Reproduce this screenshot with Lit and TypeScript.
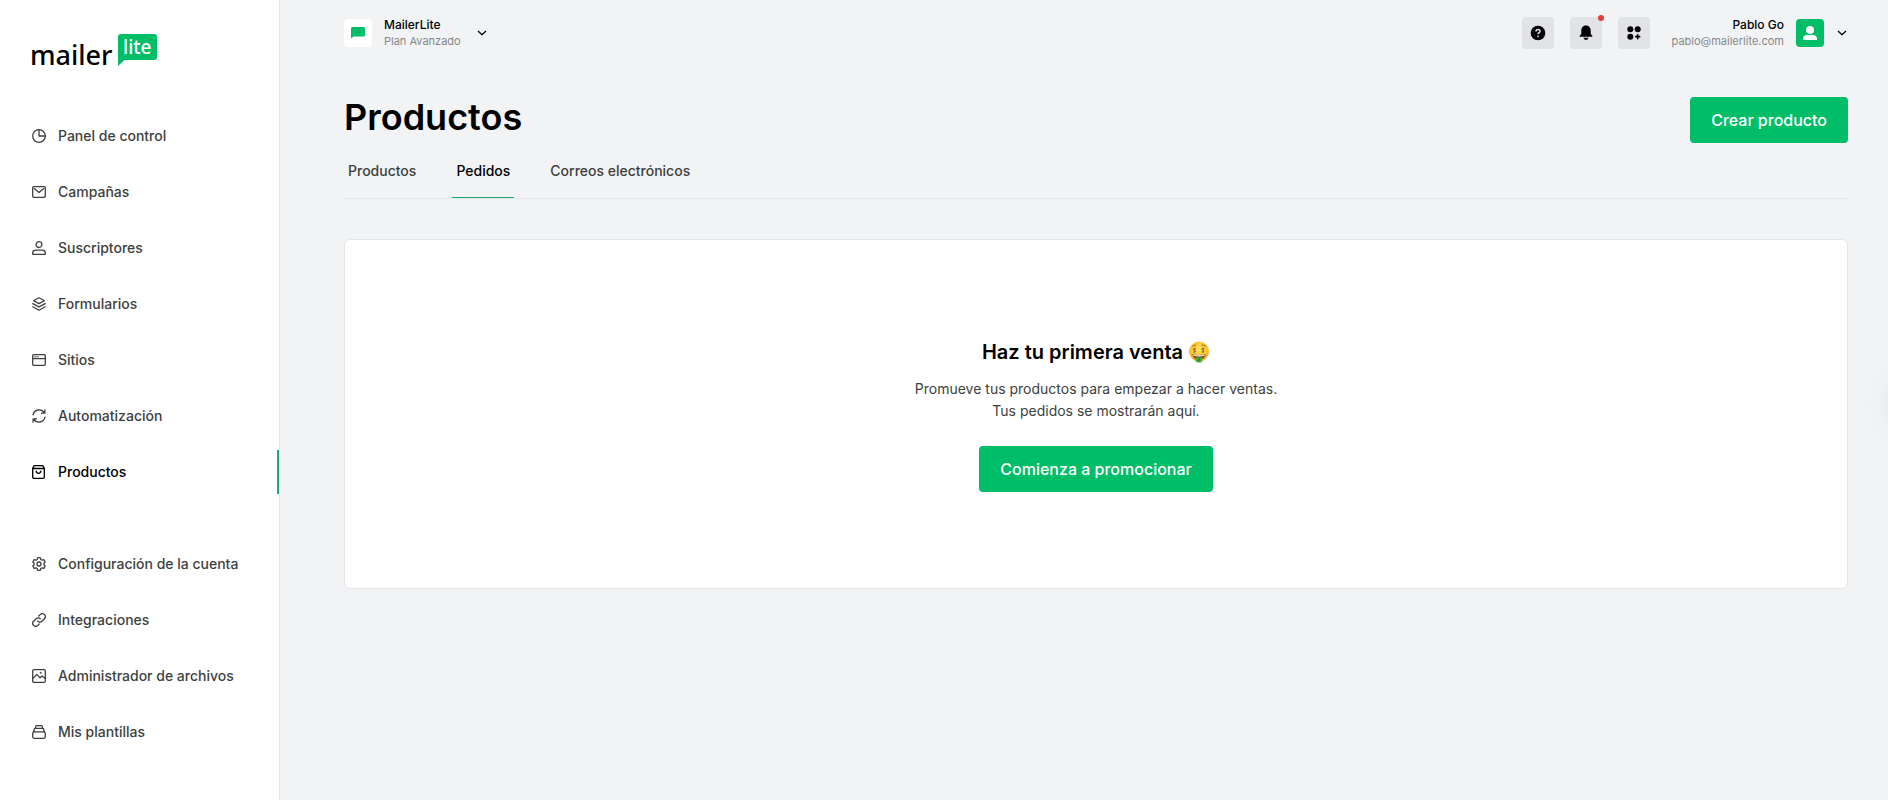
import { LitElement, html, css, svg, nothing } from "lit";
import { customElement, property } from "lit/decorators.js";

const icons: Record<string, unknown> = {
  dashboard: svg`<circle cx="7" cy="7" r="6.3"/><path d="M7 .8V7h6.2"/>`,
  mail: svg`<rect x=".7" y="1.7" width="12.6" height="10.6" rx="1"/><path d="M2.2 3.600 7 7.400l4.800-3.800"/>`,
  user: svg`<circle cx="7" cy="3.6" r="2.9"/><path d="M.7 13.300v-1.300c0-1.600 1.300-2.800 3-2.800h6.600c1.700 0 3 1.200 3 2.800v1.300z"/>`,
  layers: svg`<path d="M7 .8 12.400 3.700 7 6.600 1.600 3.700z"/><path d="M.8 6.600 7 9.900l6.200-3.300M.8 9.800 7 13.200l6.200-3.400"/>`,
  browser: svg`<rect x=".7" y="1.700" width="12.600" height="10.600" rx="1"/><path d="M.7 5.700h12.600"/><path d="M2.300 3.800h4.400" stroke-width=".8" stroke-dasharray="1 .6"/>`,
  sync: svg`<path d="M1 5.800a6.200 6.200 0 0 1 11.300-2M13 8.200a6.200 6.200 0 0 1-11.300 2M12.900.8v3.400H9.500M1.100 13.200V9.800h3.400"/>`,
  bag: svg`<path d="M2.300.7h8.400l1.600 2.500v8.800c0 .8-.5 1.300-1.300 1.300H2c-.8 0-1.300-.5-1.300-1.300V3.200zM.7 3.500h11.600M4.200 6.100c0 2.900 4.600 2.900 4.600 0"/>`,
  gear: svg`<circle cx="7" cy="7" r="2"/><path d="M5.700.7h2.600l.5 1.800 1.200.7 1.800-.5 1.400 2.300-1.300 1.300v1.400l1.300 1.300-1.400 2.300-1.800-.5-1.200.7-.5 1.800H5.700l-.5-1.800-1.200-.7-1.800.5L.8 9l1.300-1.300V6.300L.8 5l1.400-2.300 1.800.5 1.200-.7z"/>`,
  link: svg`<path d="M5.700 8.300a2.900 2.900 0 0 0 4.200 0l2.500-2.500a2.900 2.900 0 0 0-4.200-4.200L6.800 3M8.300 5.700a2.900 2.900 0 0 0-4.200 0L1.600 8.200a2.900 2.900 0 0 0 4.200 4.200L7.200 11"/>`,
  image: svg`<rect x=".7" y=".7" width="12.600" height="12.600" rx="1.300"/><path d="M.8 9.500 4.800 5.400l3.200 3.300 2-1.800 3.200 2.600"/><circle cx="8.700" cy="3.800" r=".4"/>`,
  stack: svg`<rect x=".7" y="6.900" width="12.600" height="6.400" rx="1.500"/><path d="M1.700 6.900 2.400 4c.1-.4.400-.6.800-.6h7.600c.4 0 .7.200.8.600l.7 2.900M3.300 3.400 3.900 1.200c.1-.3.300-.5.700-.5h4.800c.4 0 .6.200.7.500l.6 2.200"/>`,
};

const primary: [string, string][] = [
  ["dashboard", "Panel de control"],
  ["mail", "Campañas"],
  ["user", "Suscriptores"],
  ["layers", "Formularios"],
  ["browser", "Sitios"],
  ["sync", "Automatización"],
  ["bag", "Productos"],
];

const secondary: [string, string][] = [
  ["gear", "Configuración de la cuenta"],
  ["link", "Integraciones"],
  ["image", "Administrador de archivos"],
  ["stack", "Mis plantillas"],
];

const reset = css`
  * { box-sizing: border-box; }
  a { color: inherit; text-decoration: none; }
  button { font: inherit; color: inherit; border: 0; padding: 0; background: none; cursor: pointer; }
  svg { display: block; flex: none; }
`;

const chevron = html`<svg width="12" height="12" viewBox="0 0 12 12" fill="none" stroke="#000" stroke-width="1.2" stroke-linecap="round" stroke-linejoin="round"><path d="m2.300 4.300 3.700 3.500 3.700-3.500"/></svg>`;

@customElement("app-sidebar")
export class AppSidebar extends LitElement {
  @property() active = "";

  static styles = [
    reset,
    css`
      :host { display: block; background: #fff; border-right: 1px solid #e6e8ea; }
      .logo { display: block; padding: 33px 28px 0; height: 114px; }
      .group { display: flex; flex-direction: column; gap: 12px; margin: 0 0 48px; padding: 0; list-style: none; }
      .item { display: flex; align-items: center; gap: 12px; height: 44px; padding-left: 32px; border-right: 2px solid transparent; font-size: 14px; line-height: 20px; font-weight: 500; color: #3e3f40; }
      .item.current { color: #000; border-color: #1fab6c; }
      .word { font-family: "Noto Sans", sans-serif; font-weight: 500; }
    `,
  ];

  private group(items: [string, string][]) {
    return html`<ul class="group">
      ${items.map(([icon, label]) => html`<li>
        <a href="#" class="item ${label === this.active ? "current" : ""}" aria-current=${label === this.active ? "page" : nothing}>
          <svg width="14" height="14" viewBox="0 0 14 14" fill="none" stroke="currentColor" stroke-width="1.3" stroke-linecap="round" stroke-linejoin="round" aria-hidden="true">${icons[icon]}</svg>
          <span>${label}</span>
        </a>
      </li>`)}
    </ul>`;
  }

  render() {
    return html`
      <a class="logo" href="#" aria-label="MailerLite">
        <svg width="134" height="44" viewBox="-4 0 134 44">
          <text class="word" x="-2" y="32" font-size="27">mailer</text>
          <path fill="#00bd68" d="M89 1h33q3 0 3 3v20q0 3-3 3H92.500L86 33V4q0-3 3-3z"/>
          <text class="word" x="91" y="21" font-size="19" fill="#fff">lite</text>
        </svg>
      </a>
      <nav>${this.group(primary)}${this.group(secondary)}</nav>
    `;
  }
}

@customElement("app-topbar")
export class AppTopbar extends LitElement {
  static styles = [
    reset,
    css`
      :host { display: flex; justify-content: space-between; align-items: center; height: 66px; }
      .account, .tools { display: flex; align-items: center; }
      .account { gap: 12px; text-align: left; }
      .account.user { text-align: right; }
      .who { min-width: 80px; }
      .user .who { min-width: 118px; }
      .tools { gap: 16px; }
      .tile { display: grid; place-items: center; width: 28px; height: 28px; border-radius: 4px; background: #fff; }
      .tile.green { background: #00bd68; }
      .name, .sub { display: block; line-height: 16px; }
      .name { font-size: 12px; font-weight: 500; color: #000; }
      .sub { font-size: 11px; color: #86888a; }
      .tool { position: relative; display: grid; place-items: center; width: 32px; height: 32px; border-radius: 4px; background: #e2e3e6; }
      .dot { position: absolute; top: -2px; right: -2px; width: 6px; height: 6px; border-radius: 50%; background: #e63c3f; }
    `,
  ];

  render() {
    return html`
      <button class="account">
        <span class="tile"><svg width="14" height="12" viewBox="0 0 14 12" fill="#00bd68"><path d="M1.500 0h11A1.500 1.500 0 0 1 14 1.500V8a1.500 1.500 0 0 1-1.500 1.500h-10L0 11.500v-10A1.500 1.500 0 0 1 1.500 0z"/></svg></span>
        <span class="who"><span class="name">MailerLite</span><span class="sub">Plan Avanzado</span></span>
        ${chevron}
      </button>
      <div class="tools">
        <button class="tool" aria-label="Ayuda">
          <svg width="16" height="16" viewBox="0 0 16 16"><circle cx="8" cy="8" r="7.3"/><path d="M6 6.400c0-2.600 4-2.500 4-.2 0 1.500-2 1.500-2 3" fill="none" stroke="#e2e3e6" stroke-width="1.5"/><circle cx="8" cy="11.3" r=".9" fill="#e2e3e6"/></svg>
        </button>
        <button class="tool" aria-label="Notificaciones">
          <svg width="16" height="16" viewBox="0 0 16 16"><path d="M8 .5c3 0 4.700 2.200 4.700 5v3.300l1.700 2.100v.9H1.600v-.9l1.700-2.100V5.500c0-2.800 1.700-5 4.700-5zM5.500 12.800h5C10 14.300 9 15 8 15s-2-.7-2.500-2.200z"/></svg>
          <span class="dot"></span>
        </button>
        <button class="tool" aria-label="Aplicaciones">
          <svg width="16" height="16" viewBox="0 0 16 16"><circle cx="4.300" cy="4.300" r="3"/><circle cx="11.700" cy="4.300" r="3"/><circle cx="4.300" cy="11.700" r="3"/><path d="M11.700 9.800v3.800M9.800 11.700h3.800" stroke="#000" stroke-width="1.700" stroke-linecap="round"/></svg>
        </button>
        <button class="account user">
          <span class="who"><span class="name">Pablo Go</span><span class="sub">pablo@mailerlite.com</span></span>
          <span class="tile green"><svg width="16" height="16" viewBox="0 0 16 16" fill="#fff"><circle cx="8" cy="5" r="4"/><path d="M1 15v-1.500C1 11.300 2.700 10 5 10h6c2.300 0 4 1.300 4 3.500V15z"/></svg></span>
          ${chevron}
        </button>
      </div>
    `;
  }
}

@customElement("app-root")
export class AppRoot extends LitElement {
  static styles = [
    reset,
    css`
      :host { display: grid; grid-template-columns: 280px minmax(0, 1fr); min-height: 100vh; position: relative; overflow: hidden; background: #f1f3f5; font-family: Inter, sans-serif; color: #3e3f40; }
      .page { padding: 0 40px 40px 64px; }
      .heading { display: flex; justify-content: space-between; align-items: flex-start; padding-top: 31px; }
      h1 { margin: 0; font-size: 36px; line-height: 40px; font-weight: 600; color: #000; }
      .primary { height: 46px; padding: 0 21px; border-radius: 4px; background: #00bd68; color: #fff; font-size: 16px; line-height: 24px; font-weight: 500; white-space: nowrap; }
      .tabs { display: flex; gap: 32px; border-bottom: 1px solid #e4e6e9; }
      .tab { padding: 18px 4px 16px; border-bottom: 1px solid transparent; font-size: 14px; line-height: 20px; font-weight: 500; }
      .tab.current { color: #000; border-color: #1fab6c; }
      .card { display: flex; flex-direction: column; align-items: center; margin-top: 40px; padding: 96px 24px; border: 1px solid #e4e6e9; border-radius: 6px; background: #fff; text-align: center; }
      h2 { display: flex; align-items: center; gap: 5px; margin: 0; font-size: 20px; line-height: 32px; font-weight: 600; color: #000; }
      p { margin: 10px 0 24px; font-size: 14px; line-height: 22px; }
      .edge { position: absolute; top: 376px; right: -56px; width: 56px; height: 56px; border-radius: 50%; box-shadow: 0 0 32px rgba(0, 0, 0, 0.06); }
    `,
  ];

  render() {
    return html`
      <app-sidebar active="Productos"></app-sidebar>
      <main class="page">
        <app-topbar></app-topbar>
        <div class="heading">
          <h1>Productos</h1>
          <button class="primary">Crear producto</button>
        </div>
        <nav class="tabs">
          <a class="tab" href="#">Productos</a>
          <a class="tab current" href="#" aria-current="page">Pedidos</a>
          <a class="tab" href="#">Correos electrónicos</a>
        </nav>
        <section class="card">
          <h2>Haz tu primera venta
            <svg width="22" height="22" viewBox="0 0 22 22" role="img" aria-label="🤑">
              <defs><radialGradient id="face" cx=".5" cy=".4" r=".6"><stop offset="0" stop-color="#ffe45c"/><stop offset=".7" stop-color="#fcc430"/><stop offset="1" stop-color="#ee9a1c"/></radialGradient></defs>
              <circle cx="11" cy="10.500" r="10" fill="url(#face)"/>
              <path d="M4.500 5.200Q6 3.600 8 4M14 4q2-.4 3.500 1.200" fill="none" stroke="#8a5a14" stroke-width=".9" stroke-linecap="round"/>
              <path d="M4.300 13q6.700 2.200 13.400 0-1 5.600-6.700 5.600T4.300 13z" fill="#7a4317"/>
              <path d="M5 13.400q6 1.800 12 0l-.6 1.300q-5.400 1.500-10.800 0z" fill="#fff"/>
              <path d="M7.700 16q3.300 1 6.600 0v3.500q0 2-3.300 2t-3.300-2z" fill="#49ad45"/>
              <path d="M11 17.300v2.700" stroke="#1f7a2d" stroke-width="1.200"/>
              <g fill="none" stroke="#75501a" stroke-width=".7"><path d="M7.900 8q-1.300-1-2.300-.2t.6 1.400 1.100 1.600-2.200.1M6.700 6.500v5M16.300 8q-1.300-1-2.300-.2t.6 1.400 1.100 1.600-2.200.1M15.100 6.500v5"/></g>
            </svg>
          </h2>
          <p>Promueve tus productos para empezar a hacer ventas.<br />Tus pedidos se mostrarán aquí.</p>
          <button class="primary">Comienza a promocionar</button>
        </section>
      </main>
      <div class="edge"></div>
    `;
  }
}
